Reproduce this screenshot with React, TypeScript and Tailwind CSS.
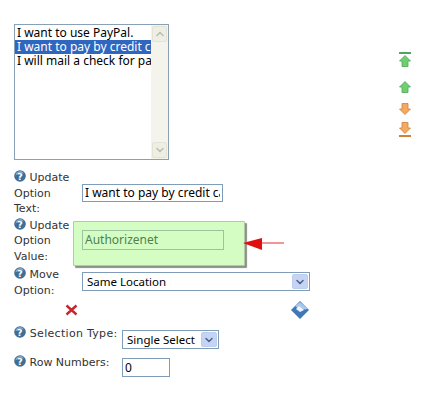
import { ChevronDown, ChevronUp } from 'lucide-react';

const labelFont = "font-['DejaVu_Sans',sans-serif] text-[11px] leading-[15.5px] text-[#333333]";
const fieldFont = "font-['Noto_Sans',sans-serif] text-[12px] text-black";
const selectFont = "font-['Noto_Sans',sans-serif] text-[11.5px] text-black";

function HelpIcon() {
  return (
    <svg width="12" height="12" viewBox="0 0 12 12" className="inline-block align-[-1px]">
      <circle cx="6" cy="6" r="5.8" fill="#3f6d94" />
      <path d="M1.5 5.5 A4.5 4.5 0 0 1 10 3.5 L6 3 Z" fill="#7fa6c6" />
      <text x="6" y="9.6" textAnchor="middle" fontSize="9.5" fontWeight="700" fontFamily="DejaVu Sans" fill="#ffffff">?</text>
    </svg>
  );
}

function SelectArrow() {
  return (
    <span className="flex h-[15px] w-[16px] shrink-0 items-center justify-center rounded-[2px] border border-[#bccdf0] bg-[#c5d4f5]">
      <ChevronDown size={12} strokeWidth={3} className="text-[#4d6185]" />
    </span>
  );
}

function ScrollButton({ up }: { up?: boolean }) {
  return (
    <span className="flex h-[16px] w-[15px] items-center justify-center rounded-[2px] border border-[#e3e3d6] bg-[#eeeee2]">
      {up ? (
        <ChevronUp size={12} strokeWidth={3} className="text-[#b9bdb4]" />
      ) : (
        <ChevronDown size={12} strokeWidth={3} className="text-[#b9bdb4]" />
      )}
    </span>
  );
}

function MoveArrow({ color, dark, dir, bar }: { color: string; dark: string; dir: 'up' | 'down'; bar?: boolean }) {
  const shape = dir === 'up' ? 'M6 0.5 L11.5 6 L9 6 L9 11.5 L3 11.5 L3 6 L0.5 6 Z' : 'M3 0.5 L9 0.5 L9 6 L11.5 6 L6 11.5 L0.5 6 L3 6 Z';
  return (
    <span className="flex w-[12px] flex-col items-center gap-[1px]">
      {bar && dir === 'up' && <span className="h-[2px] w-[12px]" style={{ backgroundColor: dark }} />}
      <svg width="12" height="12" viewBox="0 0 12 12">
        <path d={shape} fill={color} stroke={dark} strokeWidth="0.8" />
      </svg>
      {bar && dir === 'down' && <span className="h-[2px] w-[12px]" style={{ backgroundColor: dark }} />}
    </span>
  );
}

function FormRow({ label, children }: { label: string; children: React.ReactNode }) {
  return (
    <div className="flex items-center">
      <div className={`w-[68px] shrink-0 ${labelFont}`}>
        <HelpIcon /> {label.split('|')[0]}
        {label
          .split('|')
          .slice(1)
          .map((part) => (
            <div key={part}>{part}</div>
          ))}
      </div>
      {children}
    </div>
  );
}

export default function App() {
  return (
    <div className="relative h-[404px] w-[428px] overflow-hidden bg-white pl-[14px] pt-[24px]">
      <div className="flex items-start">
        {/* option list */}
        <div className="flex h-[136px] w-[155px] border border-[#8aa0b4] bg-white">
          <div className={`min-w-0 flex-1 overflow-hidden whitespace-nowrap pt-[1px] leading-[14px] ${fieldFont}`}>
            <div className="pl-[2px]">I want to use PayPal.</div>
            <div className="bg-[#2f66c0] pl-[2px] text-white">I want to pay by credit card</div>
            <div className="pl-[2px]">I will mail a check for payment</div>
          </div>
          <div className="flex w-[17px] flex-col justify-between bg-[#f4f3ec] p-[1px]">
            <ScrollButton up />
            <ScrollButton />
          </div>
        </div>
        {/* reorder buttons */}
        <div className="ml-[230px] mt-[28px] flex flex-col">
          <MoveArrow color="#6fcf6f" dark="#4fa65a" dir="up" bar />
          <div className="mt-[14px] flex">
            <MoveArrow color="#6fcf6f" dark="#4fa65a" dir="up" />
          </div>
          <div className="mt-[10px] flex">
            <MoveArrow color="#f4a860" dark="#d08038" dir="down" />
          </div>
          <div className="mt-[7px] flex">
            <MoveArrow color="#f4a860" dark="#d08038" dir="down" bar />
          </div>
        </div>
      </div>

      <div className="mt-[10px] flex w-[296px] flex-col">
        <FormRow label="Update|Option|Text:">
          <input
            readOnly
            value="I want to pay by credit card"
            className={`h-[18px] w-[141px] border border-[#7f9db9] px-[2px] outline-none ${fieldFont}`}
          />
        </FormRow>
        <div className="mt-[1px]">
          <FormRow label="Update|Option|Value:">
            <div className="h-[18px]" />
          </FormRow>
        </div>
        <div className="mt-[3px] flex items-start">
          <div className={`w-[68px] shrink-0 ${labelFont}`}>
            <HelpIcon /> Move
            <div>Option:</div>
          </div>
          <div className={`mt-[5px] flex h-[19px] w-[228px] items-center justify-between border border-[#7f9db9] pl-[4px] pr-[1px] ${selectFont}`}>
            Same Location
            <SelectArrow />
          </div>
        </div>
      </div>

      {/* delete and save */}
      <div className="mt-[3px] flex w-[296px] items-center justify-between pl-[51px]">
        <svg width="13" height="12" viewBox="0 0 13 12">
          <path d="M1.5 1.5 L11.5 10.5 M11.5 1.5 L1.5 10.5" stroke="#c8252f" strokeWidth="2.4" />
        </svg>
        <svg width="20" height="18" viewBox="0 0 20 18">
          <path d="M10 0 L19 9 L10 18 L1 9 Z" fill="#3f78b8" />
          <path d="M10 1 L18 8 L10 9 L5 5 Z" fill="#a9c8ea" />
          <path d="M9 5 L14 9 L10 11 L6 8 Z" fill="#eef5fc" />
        </svg>
      </div>

      <div className="mt-[7px] flex items-start">
        <div className={`w-[108px] shrink-0 whitespace-nowrap tracking-[0.3px] ${labelFont}`}>
          <HelpIcon /> Selection Type:
        </div>
        <div className={`mt-[4px] flex h-[19px] w-[97px] items-center justify-between whitespace-nowrap border border-[#7f9db9] pl-[4px] pr-[1px] ${selectFont}`}>
          Single Select
          <SelectArrow />
        </div>
      </div>
      <div className="mt-[6px] flex items-start">
        <div className={`w-[108px] shrink-0 whitespace-nowrap ${labelFont}`}>
          <HelpIcon /> Row Numbers:
        </div>
        <input
          readOnly
          value="0"
          className={`mt-[3px] h-[19px] w-[48px] border border-[#7f9db9] px-[2px] outline-none ${fieldFont}`}
        />
      </div>

      {/* inline edit callout */}
      <div className="absolute left-[73px] top-[221px] h-[45px] w-[172px] rounded-[1px] border border-[#b5c9a5] bg-[#d4fdc4] pl-[8px] pt-[8px] shadow-[2px_2px_1px_#8a8f88]">
        <div className="flex h-[20px] w-[142px] items-center border border-[#9cc49c] pl-[2px] font-['Noto_Sans',sans-serif] text-[12px] text-[#4f7f4f]">
          Authorizenet
        </div>
      </div>
      <svg width="42" height="16" viewBox="0 0 42 16" className="absolute left-[243px] top-[235px]">
        <path d="M0 8 L19 3 L19 15 Z" fill="#e01010" />
        <path d="M19 8 L41 8" stroke="#e03030" strokeWidth="1" />
      </svg>
    </div>
  );
}
